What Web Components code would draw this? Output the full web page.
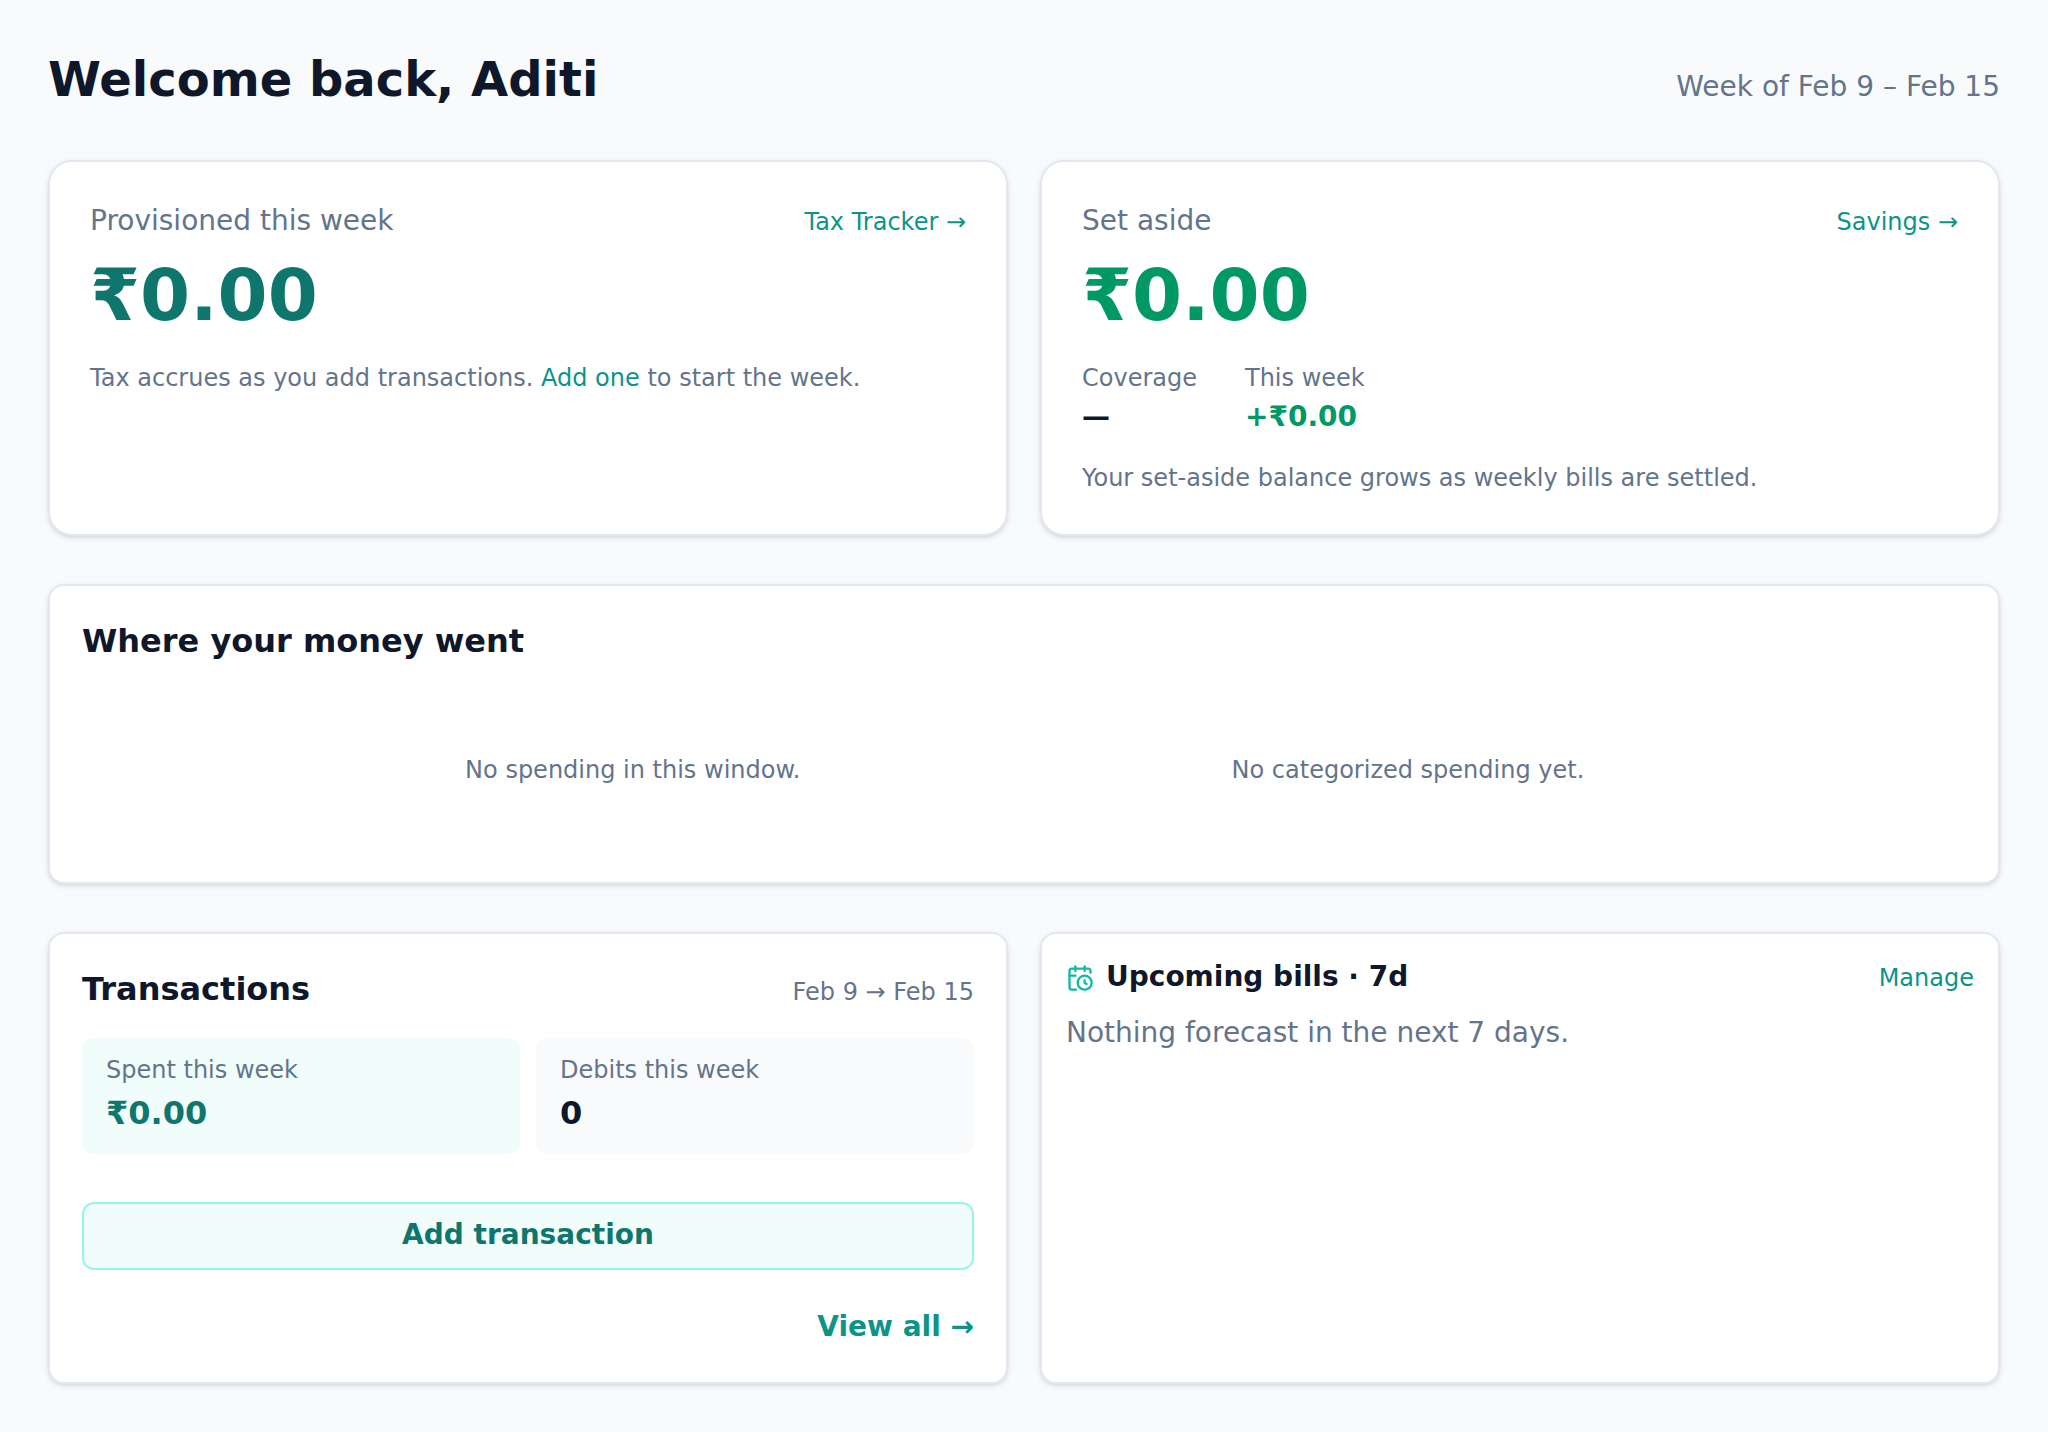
<!DOCTYPE html>
<html lang="en">
<head>
<meta charset="UTF-8">
<meta name="viewport" content="width=device-width, initial-scale=1.0">
<title>Dashboard</title>
<style>
    :root {
        --ink: #0f172a;
        --muted: #64748b;
        --line: #e2e8f0;
        --page: #f8fafc;
        --link: #0d9488;
        --teal: #0f766e;
        --teal-soft: #f0fdfa;
        --teal-line: #99f6e4;
        --green: #009966;
    }
    body {
        margin: 0;
        background: var(--page);
        color: var(--ink);
        font-family: "DejaVu Sans", sans-serif;
        font-size: 28px;
        line-height: 38px;
    }
</style>
</head>
<body>
<week-dashboard></week-dashboard>

<script>
class WeekDashboard extends HTMLElement {
    connectedCallback() {
        this.attachShadow({ mode: 'open' });
        this.shadowRoot.innerHTML = `
            <style>
                :host {
                    display: block;
                    padding: 48px;
                }
                main {
                    display: grid;
                    gap: 48px;
                }
                header {
                    display: flex;
                    justify-content: space-between;
                    align-items: baseline;
                    padding-bottom: 2px;
                }
                h1 {
                    margin: 0;
                    font-size: 48px;
                    line-height: 62px;
                }
                .week {
                    color: var(--muted);
                }
                .row {
                    display: grid;
                    grid-template-columns: 1fr 1fr;
                    gap: 32px;
                }
                @media (max-width: 1200px) {
                    .row {
                        grid-template-columns: 1fr;
                    }
                }
            </style>
            <main>
                <header>
                    <h1>Welcome back, Aditi</h1>
                    <span class="week">Week of Feb 9 – Feb 15</span>
                </header>
                <div class="row">
                    <amount-card label="Provisioned this week" amount="₹0.00" link="Tax Tracker →" href="#tax">
                        <text-note>Tax accrues as you add transactions. <text-link href="#add">Add one</text-link> to start the week.</text-note>
                    </amount-card>
                    <amount-card class="green" label="Set aside" amount="₹0.00" link="Savings →" href="#savings">
                        <stat-list></stat-list>
                        <text-note>Your set-aside balance grows as weekly bills are settled.</text-note>
                    </amount-card>
                </div>
                <spending-card></spending-card>
                <div class="row">
                    <transactions-card></transactions-card>
                    <bills-card></bills-card>
                </div>
            </main>
        `;
    }
}

class PanelCard extends HTMLElement {
    connectedCallback() {
        this.attachShadow({ mode: 'open' });
        this.shadowRoot.innerHTML = `
            <style>
                :host {
                    display: block;
                    box-sizing: border-box;
                    height: 100%;
                    padding: var(--panel-padding, 32px);
                    background: white;
                    border: 2px solid var(--line);
                    border-radius: var(--panel-radius, 16px);
                    box-shadow: 0 2px 6px 0 rgba(0, 0, 0, 0.1), 0 2px 4px -2px rgba(0, 0, 0, 0.1);
                }
            </style>
            <slot></slot>
        `;
    }
}

class TextLink extends HTMLElement {
    connectedCallback() {
        this.attachShadow({ mode: 'open' });
        this.shadowRoot.innerHTML = `
            <style>
                :host {
                    display: inline;
                }
                a {
                    color: var(--link);
                    text-decoration: none;
                }
                a:hover {
                    text-decoration: underline;
                }
            </style>
            <a href="${this.getAttribute('href')}"><slot></slot></a>
        `;
    }
}

class TextNote extends HTMLElement {
    connectedCallback() {
        this.attachShadow({ mode: 'open' });
        this.shadowRoot.innerHTML = `
            <style>
                :host {
                    display: block;
                    color: var(--muted);
                    font-size: 24px;
                    line-height: 32px;
                }
                p {
                    margin: 0;
                }
            </style>
            <p><slot></slot></p>
        `;
    }
}

class AmountCard extends HTMLElement {
    connectedCallback() {
        this.attachShadow({ mode: 'open' });
        this.shadowRoot.innerHTML = `
            <style>
                :host {
                    display: block;
                    --amount: var(--teal);
                }
                :host(.green) {
                    --amount: var(--green);
                }
                panel-card {
                    --panel-padding: 40px;
                    --panel-radius: 24px;
                }
                .head {
                    display: flex;
                    justify-content: space-between;
                    align-items: baseline;
                    margin-bottom: 10px;
                    color: var(--muted);
                }
                .head text-link {
                    font-size: 24px;
                    line-height: 28px;
                }
                .amount {
                    margin-bottom: 22px;
                    color: var(--amount);
                    font-size: 72px;
                    font-weight: 700;
                    line-height: 90px;
                }
                .body {
                    display: grid;
                    gap: 22px;
                }
            </style>
            <panel-card>
                <div class="head">
                    <span>${this.getAttribute('label')}</span>
                    <text-link href="${this.getAttribute('href')}">${this.getAttribute('link')}</text-link>
                </div>
                <div class="amount">${this.getAttribute('amount')}</div>
                <div class="body"><slot></slot></div>
            </panel-card>
        `;
    }
}

class StatList extends HTMLElement {
    connectedCallback() {
        this.attachShadow({ mode: 'open' });
        this.shadowRoot.innerHTML = `
            <style>
                :host {
                    display: block;
                }
                dl {
                    display: flex;
                    gap: 48px;
                    margin: 0;
                }
                dt {
                    color: var(--muted);
                    font-size: 24px;
                    line-height: 32px;
                }
                dd {
                    margin: 0;
                    font-weight: 700;
                    line-height: 46px;
                }
                .gain {
                    color: var(--green);
                }
            </style>
            <dl>
                <div>
                    <dt>Coverage</dt>
                    <dd>—</dd>
                </div>
                <div>
                    <dt>This week</dt>
                    <dd class="gain">+₹0.00</dd>
                </div>
            </dl>
        `;
    }
}

class SpendingCard extends HTMLElement {
    connectedCallback() {
        this.attachShadow({ mode: 'open' });
        this.shadowRoot.innerHTML = `
            <style>
                :host {
                    display: block;
                }
                h2 {
                    margin: 0 0 26px;
                    font-size: 32px;
                    line-height: 46px;
                }
                .charts {
                    display: grid;
                    grid-template-columns: 3fr 2fr;
                    gap: 48px;
                    align-items: center;
                }
                .trend {
                    display: flex;
                    justify-content: center;
                    padding: 64px 0;
                }
            </style>
            <panel-card>
                <h2>Where your money went</h2>
                <div class="charts">
                    <div class="trend"><text-note>No spending in this window.</text-note></div>
                    <text-note>No categorized spending yet.</text-note>
                </div>
            </panel-card>
        `;
    }
}

class StatTile extends HTMLElement {
    connectedCallback() {
        this.attachShadow({ mode: 'open' });
        this.shadowRoot.innerHTML = `
            <style>
                :host {
                    display: block;
                    padding: 16px 24px 14px;
                    background: var(--page);
                    border-radius: 12px;
                }
                :host(.teal) {
                    background: var(--teal-soft);
                }
                .label {
                    color: var(--muted);
                    font-size: 24px;
                    line-height: 32px;
                }
                .value {
                    font-size: 32px;
                    font-weight: 700;
                    line-height: 54px;
                }
                :host(.teal) .value {
                    color: var(--teal);
                }
            </style>
            <div class="label">${this.getAttribute('label')}</div>
            <div class="value"><slot></slot></div>
        `;
    }
}

class TransactionsCard extends HTMLElement {
    connectedCallback() {
        this.attachShadow({ mode: 'open' });
        this.shadowRoot.innerHTML = `
            <style>
                :host {
                    display: block;
                }
                .head {
                    display: flex;
                    justify-content: space-between;
                    align-items: baseline;
                    margin-bottom: 26px;
                }
                h2 {
                    margin: 0;
                    font-size: 32px;
                    line-height: 46px;
                }
                .tiles {
                    display: grid;
                    grid-template-columns: 1fr 1fr;
                    gap: 16px;
                    margin-bottom: 48px;
                }
                button {
                    display: block;
                    width: 100%;
                    padding: 12px 24px 14px;
                    background: var(--teal-soft);
                    border: 2px solid var(--teal-line);
                    border-radius: 12px;
                    color: var(--teal);
                    font: inherit;
                    font-weight: 700;
                    cursor: pointer;
                }
                .more {
                    margin-top: 38px;
                    padding-bottom: 4px;
                    font-weight: 700;
                    text-align: right;
                }
            </style>
            <panel-card>
                <div class="head">
                    <h2>Transactions</h2>
                    <text-note>Feb 9 → Feb 15</text-note>
                </div>
                <div class="tiles">
                    <stat-tile class="teal" label="Spent this week">₹0.00</stat-tile>
                    <stat-tile label="Debits this week">0</stat-tile>
                </div>
                <button type="button">Add transaction</button>
                <div class="more"><text-link href="#transactions">View all →</text-link></div>
            </panel-card>
        `;
    }
}

class BillsCard extends HTMLElement {
    connectedCallback() {
        this.attachShadow({ mode: 'open' });
        this.shadowRoot.innerHTML = `
            <style>
                :host {
                    display: block;
                }
                panel-card {
                    --panel-padding: 24px;
                }
                .head {
                    display: flex;
                    justify-content: space-between;
                    align-items: flex-start;
                    margin-bottom: 16px;
                }
                h2 {
                    display: flex;
                    gap: 12px;
                    margin: 0;
                    font-size: 28px;
                    line-height: 38px;
                }
                svg {
                    width: 28px;
                    height: 28px;
                    padding-top: 6px;
                    color: #14b8a6;
                }
                text-link {
                    font-size: 24px;
                    line-height: 40px;
                }
                p {
                    margin: 0;
                    color: var(--muted);
                }
            </style>
            <panel-card>
                <div class="head">
                    <h2>
                        <svg viewBox="0 0 24 24" fill="none" stroke="currentColor" stroke-width="2" stroke-linecap="round" stroke-linejoin="round" aria-hidden="true">
                            <path d="M16 14v2.2l1.6 1"/>
                            <path d="M16 2v4"/>
                            <path d="M21 7.5V6a2 2 0 0 0-2-2H5a2 2 0 0 0-2 2v14a2 2 0 0 0 2 2h3.5"/>
                            <path d="M3 10h5"/>
                            <path d="M8 2v4"/>
                            <circle cx="16" cy="16" r="6"/>
                        </svg>
                        <span>Upcoming bills · 7d</span>
                    </h2>
                    <text-link href="#bills">Manage</text-link>
                </div>
                <p>Nothing forecast in the next 7 days.</p>
            </panel-card>
        `;
    }
}

customElements.define('panel-card', PanelCard);
customElements.define('text-link', TextLink);
customElements.define('text-note', TextNote);
customElements.define('amount-card', AmountCard);
customElements.define('stat-list', StatList);
customElements.define('spending-card', SpendingCard);
customElements.define('stat-tile', StatTile);
customElements.define('transactions-card', TransactionsCard);
customElements.define('bills-card', BillsCard);
customElements.define('week-dashboard', WeekDashboard);
</script>
</body>
</html>
